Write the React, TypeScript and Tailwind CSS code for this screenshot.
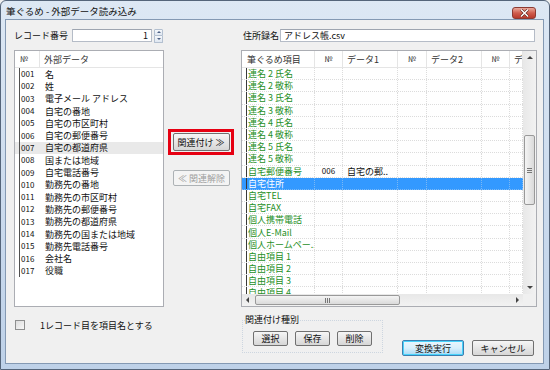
import React from 'react';

const leftRows: [string, string][] = [
  ['001', '名'],
  ['002', '姓'],
  ['003', '電子メール アドレス'],
  ['004', '自宅の番地'],
  ['005', '自宅の市区町村'],
  ['006', '自宅の郵便番号'],
  ['007', '自宅の都道府県'],
  ['008', '国または地域'],
  ['009', '自宅電話番号'],
  ['010', '勤務先の番地'],
  ['011', '勤務先の市区町村'],
  ['012', '勤務先の郵便番号'],
  ['013', '勤務先の都道府県'],
  ['014', '勤務先の国または地域'],
  ['015', '勤務先電話番号'],
  ['016', '会社名'],
  ['017', '役職'],
];

const rightRows: { name: string; no?: string; data?: string }[] = [
  { name: '連名 2 氏名' },
  { name: '連名 2 敬称' },
  { name: '連名 3 氏名' },
  { name: '連名 3 敬称' },
  { name: '連名 4 氏名' },
  { name: '連名 4 敬称' },
  { name: '連名 5 氏名' },
  { name: '連名 5 敬称' },
  { name: '自宅郵便番号', no: '006', data: '自宅の郵..' },
  { name: '自宅住所' },
  { name: '自宅TEL' },
  { name: '自宅FAX' },
  { name: '個人携帯電話' },
  { name: '個人E-Mail' },
  { name: '個人ホームペー..' },
  { name: '自由項目 1' },
  { name: '自由項目 2' },
  { name: '自由項目 3' },
  { name: '自由項目 4' },
];

const SELECTED = 9;

const Btn = ({ children, className = '' }: { children: React.ReactNode; className?: string }) => (
  <div
    className={`flex items-center justify-center rounded-[2px] border border-[#707070] bg-linear-to-b from-[#f6f6f6] via-[#e6e6e6] to-[#d6d6d6] text-[9px] leading-none text-[#111] ${className}`}
  >
    {children}
  </div>
);

const Up = () => <div className="h-0 w-0 border-x-[3px] border-b-[3px] border-x-transparent border-b-[#444]" />;
const Down = () => <div className="h-0 w-0 border-x-[3px] border-t-[3px] border-x-transparent border-t-[#444]" />;
const LeftTri = () => <div className="h-0 w-0 border-y-[3px] border-r-[3px] border-y-transparent border-r-[#444]" />;
const RightTri = () => <div className="h-0 w-0 border-y-[3px] border-l-[3px] border-y-transparent border-l-[#444]" />;

const colW = ['w-[73px]', 'w-[28px]', 'w-[55px]', 'w-[29px]', 'w-[55px]', 'w-[28px]', 'w-[13px]'];

export default function App() {
  return (
    <div className="h-[370px] w-[550px] overflow-hidden bg-[#f0f0f0] font-['Noto_Sans_CJK_JP','Noto_Sans',sans-serif]">
      <div className="flex h-full w-full flex-col rounded-t-[6px] border border-[#55657a] bg-linear-to-b from-[#dde8f4] via-[#cddcee] to-[#bed1e8]">
        {/* Title bar */}
        <div className="flex h-[18px] items-center pl-[5px]">
          <span className="pt-[3px] text-[9.5px] leading-none text-[#111]">筆ぐるめ - 外部データ読み込み</span>
          <div className="ml-auto mr-[13px] mt-[6px] flex h-[12px] w-[24px] items-center justify-center rounded-[3px] border border-[#8c3a32] bg-linear-to-b from-[#e9a99c] via-[#cf5c4d] to-[#b8392c]">
            <svg width="9" height="8" viewBox="0 0 9 8">
              <path d="M1 0.5 L8 7.5 M8 0.5 L1 7.5" stroke="#5a1a14" strokeWidth="2.6" />
              <path d="M1 0.5 L8 7.5 M8 0.5 L1 7.5" stroke="#ffffff" strokeWidth="1.5" />
            </svg>
          </div>
        </div>

        {/* Client area */}
        <div className="mb-[5px] ml-[4px] mr-[5px] flex-1 border border-[#8499b3] bg-[#f0f0f0]">
          <div className="flex pl-[8px] pt-[9px] text-[9px] leading-none text-[#111]">
            {/* Left column */}
            <div className="flex w-[150px] flex-col">
              <div className="flex h-[13px] items-center">
                <span className="w-[58px]">レコード番号</span>
                <div className="flex h-[13px] w-[80px] items-center justify-end border border-[#b5bcc7] border-t-[#9ea5b0] bg-white pr-[3px]">1</div>
                <div className="ml-[2px] flex h-[14px] w-[9px] flex-col">
                  <div className="flex flex-1 items-center justify-center rounded-t-[1px] border border-[#b3c0d0] bg-linear-to-b from-[#f6f8fb] to-[#dfe7f1]">
                    <div className="h-0 w-0 border-x-[2.5px] border-b-[2.5px] border-x-transparent border-b-[#4d6185]" />
                  </div>
                  <div className="flex flex-1 items-center justify-center rounded-b-[1px] border border-t-0 border-[#b3c0d0] bg-linear-to-b from-[#f6f8fb] to-[#dfe7f1]">
                    <div className="h-0 w-0 border-x-[2.5px] border-t-[2.5px] border-x-transparent border-t-[#4d6185]" />
                  </div>
                </div>
              </div>

              <div className="mt-[8px] h-[257px] overflow-hidden border border-[#abadb3] bg-white">
                <div className="flex h-[17px] items-center border-b border-[#e5e5e5] text-[#333]">
                  <span className="flex h-full w-[25px] items-center border-r border-[#e5e5e5] pl-[5px] text-[8px]">№</span>
                  <span className="pl-[4px]">外部データ</span>
                </div>
                {leftRows.map(([no, name], i) => (
                  <div key={no} className={`flex h-[12.3px] items-center ${i === 6 ? 'bg-[#e9e9e9]' : ''}`}>
                    <div className="ml-[4px] h-full border-l border-[#505050]" />
                    <span className="w-[25px] pl-[1px] text-[8px]">{no}</span>
                    <span>{name}</span>
                  </div>
                ))}
              </div>

              <div className="mt-[13px] flex items-center">
                <div className="ml-[1px] h-[10px] w-[10px] border border-[#8e8f8f] bg-linear-to-br from-[#dcdcdc] to-[#f8f8f8]" />
                <span className="ml-[15px]">1レコード目を項目名とする</span>
              </div>
            </div>

            {/* Middle column */}
            <div className="flex w-[77px] flex-col items-start pl-[4px] pt-[100px]">
              <div className="flex h-[26px] w-[66px] items-center justify-center border-[3px] border-[#e60012]">
                <Btn className="h-[18px] w-[57px]">関連付け ≫</Btn>
              </div>
              <div className="ml-[5px] mt-[15px] flex h-[16px] w-[57px] items-center justify-center rounded-[2px] border border-[#adb2b5] bg-[#f4f4f4] text-[9px] text-[#a0a0a0]">
                ≪ 関連解除
              </div>
            </div>

            {/* Right column */}
            <div className="flex w-[296px] flex-col">
              <div className="flex h-[13px] items-center">
                <span className="w-[39px] pl-[2px]">住所録名</span>
                <div className="flex h-[13px] w-[255px] items-center border border-[#b5bcc7] border-t-[#9ea5b0] bg-white pl-[3px]">アドレス帳.csv</div>
              </div>

              <div className="mt-[8px] flex h-[257px] flex-col overflow-hidden border border-[#abadb3] bg-white">
                <div className="flex flex-1 overflow-hidden">
                  {/* grid */}
                  <div className="w-[281px] overflow-hidden">
                    <div className="flex h-[17px] border-b border-[#e5e5e5] text-[#333]">
                      {['筆ぐるめ項目', '№', 'データ1', '№', 'データ2', '№', 'デ'].map((h, c) => (
                        <div
                          key={c}
                          className={`flex h-full shrink-0 items-center overflow-hidden whitespace-nowrap border-r border-[#e5e5e5] ${colW[c]} ${
                            h === '№' ? 'justify-center text-[8px]' : c === 0 ? 'pl-[5px]' : 'pl-[4px]'
                          }`}
                        >
                          {h}
                        </div>
                      ))}
                    </div>
                    {rightRows.map((r, i) => {
                      const sel = i === SELECTED;
                      return (
                        <div
                          key={r.name}
                          className={`flex h-[12.2px] border-b border-dotted ${sel ? 'border-[#7ab8f5] bg-[#3399ff] text-white' : 'border-[#dcdcdc]'}`}
                        >
                          <div className={`flex h-full w-[73px] shrink-0 items-center overflow-hidden whitespace-nowrap border-r border-dotted pl-[4px] ${sel ? 'border-[#7ab8f5]' : 'border-[#dcdcdc] text-[#1f8f1f]'}`}>
                            <div className="h-full border-l border-[#3a3a3a]" />
                            <span className="pl-[1px]">{r.name}</span>
                          </div>
                          {[1, 2, 3, 4, 5, 6].map((c) => (
                            <div
                              key={c}
                              className={`flex h-full shrink-0 items-center overflow-hidden whitespace-nowrap border-r border-dotted ${colW[c]} ${sel ? 'border-[#7ab8f5]' : 'border-[#dcdcdc]'} ${
                                c === 1 ? 'justify-center text-[8px]' : 'pl-[4px]'
                              }`}
                            >
                              {c === 1 ? r.no : c === 2 ? r.data : ''}
                            </div>
                          ))}
                        </div>
                      );
                    })}
                  </div>
                  {/* vertical scrollbar */}
                  <div className="flex w-[13px] flex-col bg-linear-to-r from-[#e8e8e8] to-[#f2f2f2]">
                    <div className="flex h-[13px] items-center justify-center">
                      <Up />
                    </div>
                    <div className="h-[71px]" />
                    <div className="mx-[1px] flex h-[70px] flex-col items-center justify-center gap-[1px] rounded-[2px] border border-[#999] bg-linear-to-r from-[#f4f4f4] to-[#dadada]">
                      <div className="h-px w-[5px] bg-[#777]" />
                      <div className="h-px w-[5px] bg-[#777]" />
                      <div className="h-px w-[5px] bg-[#777]" />
                    </div>
                    <div className="flex-1" />
                    <div className="flex h-[13px] items-center justify-center">
                      <Down />
                    </div>
                  </div>
                </div>
                {/* horizontal scrollbar */}
                <div className="flex h-[12px] shrink-0">
                  <div className="flex w-[281px] items-center bg-linear-to-b from-[#e8e8e8] to-[#f2f2f2]">
                    <div className="flex w-[11px] justify-center">
                      <LeftTri />
                    </div>
                    <div className="ml-[2px] flex h-[10px] w-[145px] items-center justify-center gap-[1px] rounded-[2px] border border-[#999] bg-linear-to-b from-[#f4f4f4] to-[#dadada]">
                      <div className="h-[5px] w-px bg-[#777]" />
                      <div className="h-[5px] w-px bg-[#777]" />
                      <div className="h-[5px] w-px bg-[#777]" />
                    </div>
                    <div className="flex-1" />
                    <div className="flex w-[11px] justify-center">
                      <RightTri />
                    </div>
                  </div>
                  <div className="w-[13px] bg-[#f0f0f0]" />
                </div>
              </div>

              <div className="flex">
                <fieldset className="ml-[1px] mt-[8px] h-[38px] w-[141px] border border-dotted border-[#cdd6e0] pt-[6px]">
                  <legend className="ml-[2px] px-0 text-[9px] leading-[10px]">関連付け種別</legend>
                  <div className="ml-[10px] flex gap-[7px]">
                    <Btn className="h-[15px] w-[35px]">選択</Btn>
                    <Btn className="h-[15px] w-[35px]">保存</Btn>
                    <Btn className="h-[15px] w-[35px]">削除</Btn>
                  </div>
                </fieldset>
                <div className="ml-[19px] mt-[33px] flex h-[16px] w-[62px] items-center justify-center rounded-[2px] border border-[#3c7fb1] bg-linear-to-b from-[#eaf6fd] via-[#d9f0fc] to-[#a7d9f5] text-[9px] leading-none shadow-[inset_0_0_0_1px_#48d3fb]">
                  変換実行
                </div>
                <Btn className="ml-[8px] mt-[33px] h-[16px] w-[62px]">キャンセル</Btn>
              </div>
            </div>
          </div>
        </div>
      </div>
    </div>
  );
}
